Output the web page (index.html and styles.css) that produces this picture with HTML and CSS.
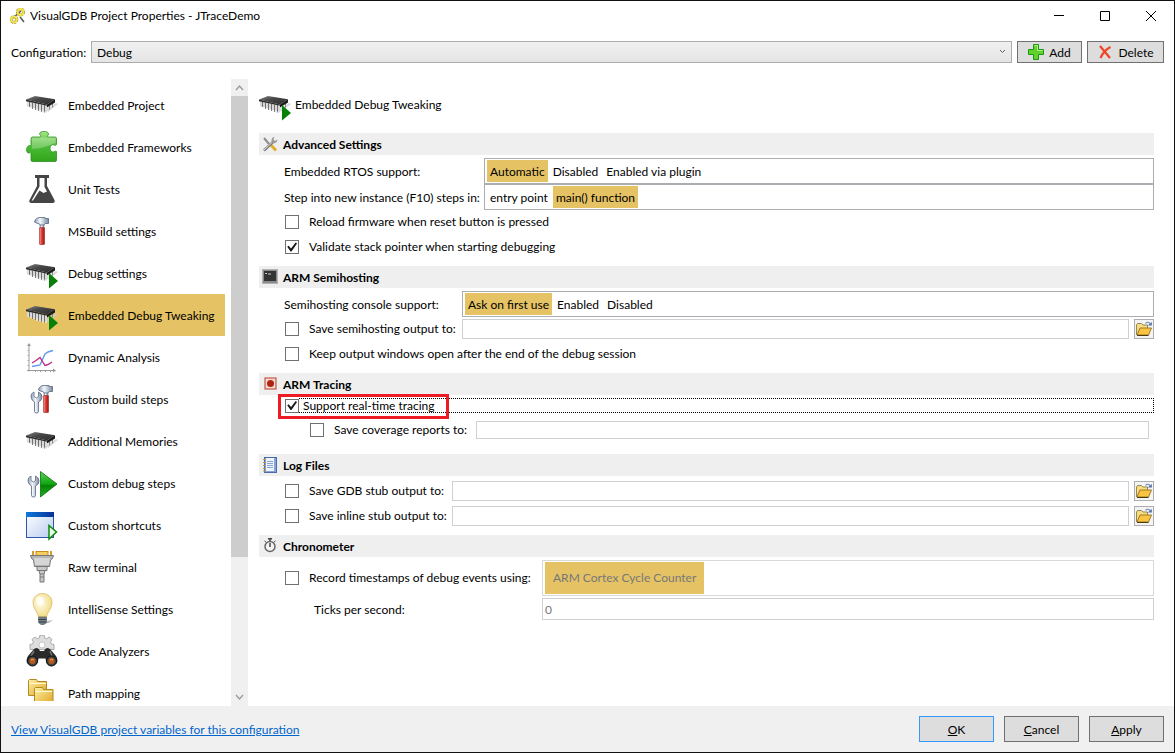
FILE: index.html
```html
<!DOCTYPE html>
<html lang="en">

<head>
    <meta charset="utf-8">
    <title>VisualGDB Project Properties - JTraceDemo</title>
    <link rel="stylesheet" href="styles.css">
</head>

<body>
    <!-- shared icon shapes -->
    <svg class="defs" width="0" height="0" aria-hidden="true">
        <defs>
            <linearGradient id="chipTop" x1="0" y1="0" x2="1" y2="1">
                <stop offset="0" stop-color="#888" />
                <stop offset="0.4" stop-color="#484848" />
                <stop offset="1" stop-color="#2c2c2c" />
            </linearGradient>
            <linearGradient id="green" x1="0" y1="0" x2="0" y2="1">
                <stop offset="0" stop-color="#a5e584" />
                <stop offset="0.5" stop-color="#4cbb35" />
                <stop offset="1" stop-color="#2fa51c" />
            </linearGradient>
            <linearGradient id="play" x1="0" y1="0" x2="0" y2="1">
                <stop offset="0" stop-color="#5bd05b" />
                <stop offset="0.5" stop-color="#0fa30f" />
                <stop offset="0.55" stop-color="#078207" />
                <stop offset="1" stop-color="#1fb51f" />
            </linearGradient>
            <linearGradient id="red" x1="0" y1="0" x2="1" y2="0">
                <stop offset="0" stop-color="#f4a49c" />
                <stop offset="0.45" stop-color="#e03a35" />
                <stop offset="1" stop-color="#9c1513" />
            </linearGradient>
            <linearGradient id="steel" x1="0" y1="0" x2="1" y2="0">
                <stop offset="0" stop-color="#8f9db3" />
                <stop offset="0.4" stop-color="#f4f8fd" />
                <stop offset="1" stop-color="#7a8aa3" />
            </linearGradient>
            <linearGradient id="gold" x1="0" y1="0" x2="1" y2="1">
                <stop offset="0" stop-color="#fdf0a8" />
                <stop offset="1" stop-color="#dfa520" />
            </linearGradient>
            <linearGradient id="pane" x1="0" y1="0" x2="1" y2="1">
                <stop offset="0" stop-color="#fff" />
                <stop offset="1" stop-color="#b9ccf0" />
            </linearGradient>
            <linearGradient id="caption" x1="0" y1="0" x2="1" y2="0">
                <stop offset="0" stop-color="#0a7bdc" />
                <stop offset="1" stop-color="#0a2f96" />
            </linearGradient>
            <radialGradient id="glass" cx="0.4" cy="0.4" r="0.6">
                <stop offset="0" stop-color="#fffdf0" />
                <stop offset="1" stop-color="#f3dc85" />
            </radialGradient>
        </defs>

        <symbol id="chip" viewBox="0 0 32 32">
            <path d="M20 20l10-6 2 1-10 8z" fill="#ccc" opacity="0.7" />
            <path d="M1 12v5l20 6v-6z" fill="#9a9a9a" />
            <path d="M2 12v6M5 13v6M8 13.500v6.500M11 14v8M14 15v7.500M17 15.500v8M20 16v8" stroke="#eee" stroke-width="1.500" />
            <path d="M3.500 13v5M6.500 14v6M9.500 14.500v6.500M12.500 15v7M15.500 15.500v7.500M18.500 16v7.500" stroke="#666" stroke-width="0.800" />
            <path d="M23.500 17v3.500M26.500 15v3.500" stroke="#888" />
            <path d="M0 10.500l9-3.500 20 3.300-8 5.200z" fill="url(#chipTop)" />
            <path d="M0 10.500l21 5v1.200l-21-4.500z" fill="#2a2a2a" />
            <path d="M21 15.500l8-5.200v3.200l-8 5z" fill="#1c1c1c" />
        </symbol>

        <symbol id="chip-run" viewBox="0 0 32 32">
            <use href="#chip" />
            <path d="M23 16l9 8-9 7.500z" fill="#088008" />
        </symbol>

        <symbol id="puzzle" viewBox="0 0 32 32">
            <path d="M5 8q0-2 1.500-2H14c1.500-1 0-2-.5-3C13.500-.5 22.500-.5 22.500 3c0 1.500-2 2-1 3H29q1.500 0 1.500 1.500v6c-1 1.500-2 .5-3 .3-4.500-.8-4.500 7.400-.5 7.200 1.500-.2 2.500-1.500 3.500-.5V29q0 1.500-1.500 1.500H6.500Q5 30.500 5 29v-7c-.5-1-1.500.3-3 0-2.500-1.500-1.500-7.500 1.500-7.500q1.500.5 1.500-1z" fill="url(#green)" stroke="#2f8f22" stroke-width="0.800" />
            <path d="M5.800 8.500q0-1.700 1.500-1.700H29.500v5q-12 6-23.500 6z" fill="#fff" opacity="0.250" />
        </symbol>

        <symbol id="flask" viewBox="0 0 32 32">
            <path d="M9 2h14v3h-2v8l7.500 14q1 3-2 3h-21q-3 0-2-3L11 13V5H9z" fill="#454545" />
            <path d="M13.500 5h5v9l2.500 4.500-3.500 1.500-4-2.500-6.500 10H5.700l7.800-14z" fill="#fff" />
        </symbol>

        <symbol id="hammer" viewBox="0 0 32 32">
            <path d="M14 9h4v5h-4z" fill="url(#steel)" stroke="#68788f" stroke-width="0.600" />
            <path d="M8.500 7q1-4.500 5.500-4.500h5V3.500h3.500v5H19l-1 1.500h-4q-.5-2-2.500-1.500z" fill="url(#steel)" stroke="#56667e" stroke-width="0.800" />
            <rect x="13.500" y="12.500" width="5" height="17" rx="0.600" fill="url(#red)" stroke="#932420" stroke-width="0.600" />
        </symbol>

        <symbol id="wrench" viewBox="0 0 32 32">
            <path d="M8 9q-3.500 1.500-3 5t3.500 5v9.500q0 1.500 2 1.500t2-1.500V19q3.500-1.500 3.500-5t-3.500-5v4.500l-2 1.500-2.500-1.500z" fill="url(#steel)" stroke="#66758b" stroke-width="0.900" />
        </symbol>

        <symbol id="steps" viewBox="0 0 32 32">
            <use href="#hammer" x="4" />
            <use href="#wrench" />
        </symbol>

        <symbol id="debug-steps" viewBox="0 0 32 32">
            <use href="#wrench" x="-3" />
            <path d="M14.500 4.500L31 17 14.500 30z" fill="url(#play)" stroke="#087008" stroke-width="0.800" />
        </symbol>

        <symbol id="chart" viewBox="0 0 32 32">
            <path d="M3 3v27.500M1 29.500h27M1.500 9.500h1M1.500 14.500h1M1.500 19.500h1M1.500 24.500h1M9.500 29v2M14.500 29v2M19.500 29v2M24.500 29v2" stroke="#9a9a9a" fill="none" />
            <path d="M1 5l2-3 2 3zM27 27.500l3 2-3 2z" fill="#9a9a9a" />
            <path d="M6 25.500l8-1.500 5-11 3-2 5-1.500" stroke="#5b9bf0" stroke-width="1.400" fill="none" />
            <path d="M6 22l4-2.500 4-3 5 8 3-1 4-2.500" stroke="#c02c86" stroke-width="1.400" fill="none" />
        </symbol>

        <symbol id="shortcut" viewBox="0 0 32 32">
            <rect x="0.500" y="3.500" width="27" height="25" fill="url(#pane)" stroke="#2f56a8" />
            <rect x="0" y="3" width="28" height="5" fill="url(#caption)" />
            <path d="M23 16.500l7.500 6.500-7.500 7z" fill="#e8fbe8" stroke="#0b8a0b" stroke-width="1.500" />
        </symbol>

        <symbol id="plug" viewBox="0 0 32 32">
            <rect x="10" y="0.500" width="12" height="4" fill="#f5cf5a" stroke="#c58c1e" />
            <path d="M7 0v5M25 0v5" stroke="#d89b26" stroke-width="2" />
            <path d="M4.500 4.500h23l-1 3-2 1.500-1 6.500h-15l-1-6.500-2-1.500z" fill="#b5b5b5" stroke="#767676" />
            <path d="M8 7h16l-1 7H9z" fill="#d6d6d6" />
            <path d="M11 15.500h10v4h-2l-1 4v7.500h-4v-7.500l-1-4h-2z" fill="#c8c8c8" stroke="#777" />
            <path d="M13 19.500h6M14 23h4M14 26h4" stroke="#777" />
        </symbol>

        <symbol id="bulb" viewBox="0 0 32 32">
            <path d="M19 28l8-1-4 3-6 1z" fill="#aaa" opacity="0.700" />
            <path d="M12.500 24c0-4-5.500-8-5.500-14.500 0-12 19-12 19 0C26 16 20.500 20 20.500 24z" fill="url(#glass)" stroke="#d9bd64" stroke-width="0.800" />
            <path d="M12.500 24h8v5.500l-2.500 2h-3l-2.500-2z" fill="#77838c" stroke="#4c555c" stroke-width="0.600" />
            <path d="M12.500 26.500h8M13 29h7" stroke="#333b42" />
            <ellipse cx="14" cy="8" rx="4" ry="4.500" fill="#fff" opacity="0.700" />
        </symbol>

        <symbol id="binoculars" viewBox="0 0 32 32">
            <path d="M14 0h4l.7 3 2 .8L23 2l3 2.500-1.500 2.500 1 2 2.500.5v5h-24v-5l2.500-.5 1-2L6 4.500 9 2l2.300 1.800 2-.8z" fill="#dedede" stroke="#9a9a9a" stroke-width="0.800" />
            <circle cx="16" cy="10" r="3" fill="#fff" stroke="#aaa" stroke-width="0.600" />
            <path d="M8 14q4-3 6 2h4q2-5 6-2l6 7q3 5 0 8-3 3-7 1.500-3-1.500-3.500-7h-7q-.5 5.500-3.500 7-4 1.500-7-1.500-3-3 0-8z" fill="#2a2a2a" />
            <path d="M8 16l-3 5M24 16l2 5" stroke="#777" stroke-width="1.500" />
            <circle cx="6.500" cy="26" r="5" fill="#444" stroke="#111" />
            <circle cx="25.500" cy="26" r="5" fill="#444" stroke="#111" />
            <circle cx="6.500" cy="26" r="3" fill="#b5591c" />
            <circle cx="25.500" cy="26" r="3" fill="#b5591c" />
            <path d="M5 25q1.500-1.500 3 0M24 25q1.500-1.500 3 0" stroke="#ffac58" fill="none" />
        </symbol>

        <symbol id="folders" viewBox="0 0 32 32">
            <path d="M2.500 18.500v-15l1-1h7l1 2h9v14z" fill="url(#gold)" stroke="#b38a22" />
            <path d="M3 6.500h17" stroke="#fff8cf" />
            <path d="M8.500 27.500v-16l1-1h7l1 2h9.500v15z" fill="url(#gold)" stroke="#b38a22" />
            <path d="M9 14.500h17" stroke="#fff8cf" />
        </symbol>

        <symbol id="open" viewBox="0 0 16 16">
            <path d="M.5 14V4l1-1.500h4L7 4h4.500v3" fill="#f9dd7c" stroke="#94865a" />
            <path d="M1 14l3-7h11.500l-3 7z" fill="#fbc440" stroke="#9a7a2c" />
            <path d="M1 14.500h11.500" stroke="#4b3a10" />
            <path d="M9.500 2.500q2-2.500 4.500 0" stroke="#6d88bb" fill="none" stroke-width="1.200" />
            <path d="M15.800 1v3.500h-4z" fill="#4d6ea8" />
        </symbol>
    </svg>

    <div class="window">
        <header class="titlebar">
            <svg class="icon16" viewBox="0 0 16 16">
                <path d="M10 9l4 5M3 10l8-7" stroke="#555" stroke-width="1.500" />
                <circle cx="10.500" cy="4" r="3" fill="none" stroke="#a39116" stroke-width="3" stroke-dasharray="2 0.500" />
                <circle cx="10.500" cy="4" r="3" fill="none" stroke="#f3e552" stroke-width="1.800" />
                <circle cx="4" cy="11.500" r="2.800" fill="none" stroke="#a39116" stroke-width="3" stroke-dasharray="2 0.500" />
                <circle cx="4" cy="11.500" r="2.800" fill="none" stroke="#f3e552" stroke-width="1.800" />
            </svg>
            <h1>VisualGDB Project Properties - JTraceDemo</h1>
            <button class="caption-button" aria-label="Minimize"><svg width="10" height="10" viewBox="0 0 10 10"><path d="M0 4.500h10" stroke="#000" /></svg></button>
            <button class="caption-button" aria-label="Maximize"><svg width="10" height="10" viewBox="0 0 10 10"><path d="M.5.5h9v9h-9z" fill="none" stroke="#000" /></svg></button>
            <button class="caption-button" aria-label="Close"><svg width="10" height="10" viewBox="0 0 10 10"><path d="M0 0l10 10M10 0L0 10" stroke="#000" /></svg></button>
        </header>

        <div class="config">
            <label for="configuration">Configuration:</label>
            <div class="combo">
                <select id="configuration">
                    <option>Debug</option>
                </select>
                <svg class="combo-arrow" width="7" height="5" viewBox="0 0 7 5"><path d="M1 1l2.500 2.500L6 1" fill="none" stroke="#606060" /></svg>
            </div>
            <button class="button add">
                <svg class="icon16" viewBox="0 0 16 16"><path d="M5.500.5h5v5h5v5h-5v5h-5v-5h-5v-5h5z" fill="#5fd32c" stroke="#1d9612" /><path d="M6.500 1.500h3v5h5" fill="none" stroke="#b5f08a" /></svg>
                <span>Add</span>
            </button>
            <button class="button delete">
                <svg class="icon16" viewBox="0 0 16 16"><path d="M3 2l10 12M13.500 3Q7 6 3.500 14" fill="none" stroke="#f04423" stroke-width="2.200" /></svg>
                <span>Delete</span>
            </button>
        </div>

        <div class="body">
            <nav class="sidebar">
                <ul class="pages">
                    <li><a href="#"><svg><use href="#chip" /></svg><span>Embedded Project</span></a></li>
                    <li><a href="#"><svg><use href="#puzzle" /></svg><span>Embedded Frameworks</span></a></li>
                    <li><a href="#"><svg><use href="#flask" /></svg><span>Unit Tests</span></a></li>
                    <li><a href="#"><svg><use href="#hammer" /></svg><span>MSBuild settings</span></a></li>
                    <li><a href="#"><svg><use href="#chip-run" /></svg><span>Debug settings</span></a></li>
                    <li><a href="#" class="selected"><svg><use href="#chip-run" /></svg><span>Embedded Debug Tweaking</span></a></li>
                    <li><a href="#"><svg><use href="#chart" /></svg><span>Dynamic Analysis</span></a></li>
                    <li><a href="#"><svg><use href="#steps" /></svg><span>Custom build steps</span></a></li>
                    <li><a href="#"><svg><use href="#chip" /></svg><span>Additional Memories</span></a></li>
                    <li><a href="#"><svg><use href="#debug-steps" /></svg><span>Custom debug steps</span></a></li>
                    <li><a href="#"><svg><use href="#shortcut" /></svg><span>Custom shortcuts</span></a></li>
                    <li><a href="#"><svg><use href="#plug" /></svg><span>Raw terminal</span></a></li>
                    <li><a href="#"><svg><use href="#bulb" /></svg><span>IntelliSense Settings</span></a></li>
                    <li><a href="#"><svg><use href="#binoculars" /></svg><span>Code Analyzers</span></a></li>
                    <li><a href="#"><svg><use href="#folders" /></svg><span>Path mapping</span></a></li>
                </ul>
                <div class="scrollbar">
                    <svg viewBox="0 0 17 17"><path d="M5 11l3.500-4 3.500 4" fill="none" stroke="#999" stroke-width="1.300" /></svg>
                    <div class="track"><div class="thumb"></div></div>
                    <svg viewBox="0 0 17 17"><path d="M5 6l3.500 4L12 6" fill="none" stroke="#999" stroke-width="1.300" /></svg>
                </div>
            </nav>

            <main>
                <div class="page-title">
                    <svg><use href="#chip-run" /></svg>
                    <span>Embedded Debug Tweaking</span>
                </div>

                <section class="advanced">
                    <h2>
                        <svg class="icon16" viewBox="0 0 16 16"><path d="M2 2l5 6" stroke="#8c8c8c" stroke-width="2" /><path d="M8 8l6 6.500" stroke="#e0b02c" stroke-width="3" /><path d="M2 14.500L11 6" stroke="#7c7c7c" stroke-width="2.500" /><path d="M2 14L11 5.500" stroke="#d9d9d9" /><path d="M12.500.8q-3 .7-3 4t3.500 2.200q2.500-.8 2.500-3.500L13 5l-1.500-1.500z" fill="#9a9a9a" /></svg>
                        <span>Advanced Settings</span>
                    </h2>
                    <div class="rows">
                        <div class="row choice">
                            <span class="caption">Embedded RTOS support:</span>
                            <div class="options">
                                <label><input type="radio" name="rtos" checked>Automatic</label>
                                <label><input type="radio" name="rtos">Disabled</label>
                                <label><input type="radio" name="rtos">Enabled via plugin</label>
                            </div>
                        </div>
                        <div class="row choice">
                            <span class="caption">Step into new instance (F10) steps in:</span>
                            <div class="options">
                                <label><input type="radio" name="step">entry point</label>
                                <label><input type="radio" name="step" checked>main() function</label>
                            </div>
                        </div>
                        <div class="row">
                            <label class="check"><input type="checkbox">Reload firmware when reset button is pressed</label>
                        </div>
                        <div class="row">
                            <label class="check"><input type="checkbox" checked>Validate stack pointer when starting debugging</label>
                        </div>
                    </div>
                </section>

                <section class="semihosting">
                    <h2>
                        <svg class="icon16" viewBox="0 0 16 16"><rect x="0.500" y="0.500" width="15" height="14" fill="#8b8b8b" stroke="#b4b4b4" /><rect x="2" y="2" width="12" height="10" fill="#333" /><path d="M3 4.500h2M6 5h3" stroke="#ccc" /></svg>
                        <span>ARM Semihosting</span>
                    </h2>
                    <div class="rows">
                        <div class="row choice">
                            <span class="caption">Semihosting console support:</span>
                            <div class="options">
                                <label><input type="radio" name="console" checked>Ask on first use</label>
                                <label><input type="radio" name="console">Enabled</label>
                                <label><input type="radio" name="console">Disabled</label>
                            </div>
                        </div>
                        <div class="row">
                            <label class="check caption"><input type="checkbox">Save semihosting output to:</label>
                            <input type="text" class="path" aria-label="Semihosting output file">
                            <button class="browse" aria-label="Browse"><svg class="icon16"><use href="#open" /></svg></button>
                        </div>
                        <div class="row">
                            <label class="check"><input type="checkbox">Keep output windows open after the end of the debug session</label>
                        </div>
                    </div>
                </section>

                <section class="tracing">
                    <h2>
                        <svg class="icon16" viewBox="0 0 16 16"><rect x="3" y="2" width="11" height="11" fill="#f6d9d2" stroke="#c05a48" stroke-width="1.200" /><circle cx="8.500" cy="7.500" r="3.500" fill="#ae2410" /></svg>
                        <span>ARM Tracing</span>
                    </h2>
                    <div class="rows">
                        <div class="row realtime">
                            <label class="check"><input type="checkbox" checked><span>Support real-time tracing</span></label>
                        </div>
                        <div class="row coverage">
                            <label class="check caption"><input type="checkbox">Save coverage reports to:</label>
                            <input type="text" class="path" aria-label="Coverage report file">
                        </div>
                    </div>
                </section>

                <section class="logs">
                    <h2>
                        <svg class="icon16" viewBox="0 0 16 16"><rect x="2.500" y="0.500" width="12" height="15" fill="#86a5d8" stroke="#4a6aa8" /><rect x="4" y="1" width="8" height="13" fill="#eef4ff" /><path d="M5 4.500h6M5 6.500h6M5 8.500h6M5 10.500h6" stroke="#8aa5d2" /><path d="M1 2.500h3M1 5.500h3M1 8.500h3M1 11.500h3M1 14h3" stroke="#b59b4a" /></svg>
                        <span>Log Files</span>
                    </h2>
                    <div class="rows">
                        <div class="row">
                            <label class="check caption"><input type="checkbox">Save GDB stub output to:</label>
                            <input type="text" class="path" aria-label="GDB stub output file">
                            <button class="browse" aria-label="Browse"><svg class="icon16"><use href="#open" /></svg></button>
                        </div>
                        <div class="row">
                            <label class="check caption"><input type="checkbox">Save inline stub output to:</label>
                            <input type="text" class="path" aria-label="Inline stub output file">
                            <button class="browse" aria-label="Browse"><svg class="icon16"><use href="#open" /></svg></button>
                        </div>
                    </div>
                </section>

                <section class="chronometer">
                    <h2>
                        <svg class="icon16" viewBox="0 0 16 16"><circle cx="8" cy="8.500" r="5" fill="#f4f4f4" stroke="#666" stroke-width="1.500" /><path d="M6 .8h4M8 1v2M8 5v4" stroke="#444" stroke-width="1.500" /><path d="M2.500 3l1.500 1M13.500 3L12 4" stroke="#555" /></svg>
                        <span>Chronometer</span>
                    </h2>
                    <div class="rows">
                        <div class="row choice tall">
                            <label class="check caption"><input type="checkbox">Record timestamps of debug events using:</label>
                            <div class="options disabled">
                                <label><input type="radio" name="counter" checked disabled>ARM Cortex Cycle Counter</label>
                            </div>
                        </div>
                        <div class="row ticks">
                            <label class="caption" for="ticks">Ticks per second:</label>
                            <input type="text" id="ticks" value="0" disabled>
                        </div>
                    </div>
                </section>
            </main>
        </div>

        <footer>
            <a href="#">View VisualGDB project variables for this configuration</a>
            <button class="button default"><span><u>O</u>K</span></button>
            <button class="button"><span><u>C</u>ancel</span></button>
            <button class="button"><span><u>A</u>pply</span></button>
        </footer>
    </div>
</body>

</html>
```
FILE: styles.css
```css
* {
    box-sizing: border-box;
}

body {
    margin: 0;
}

body,
button,
input,
select {
    font-family: Lato, "Noto Sans", sans-serif;
    font-size: 12px;
    line-height: 16px;
    color: #000;
}

.defs {
    position: absolute;
}

.window {
    display: flex;
    flex-direction: column;
    height: 100vh;
    border: 1px solid #111;
    background-color: #fff;
}

.icon16 {
    width: 16px;
    height: 16px;
    flex: none;
}

/* title bar */
.titlebar {
    display: flex;
    align-items: center;
    height: 30px;
    padding-left: 9px;
}

.titlebar h1 {
    flex: 1;
    margin: 0 0 0 4px;
    font-size: 12px;
    font-weight: normal;
}

.caption-button {
    display: flex;
    align-items: center;
    justify-content: center;
    width: 46px;
    height: 28px;
    padding: 0;
    border: none;
    background: none;
}

/* configuration row */
.config {
    display: flex;
    align-items: center;
    gap: 5px;
    margin: 10px 10px 0;
}

.config label {
    width: 75px;
    padding-top: 2px;
    white-space: nowrap;
}

.combo {
    position: relative;
    flex: 1;
}

.combo select {
    display: block;
    width: 100%;
    height: 22px;
    padding: 2px 5px 0;
    border: 1px solid #acacac;
    border-radius: 0;
    background: linear-gradient(#f0f0f0, #e5e5e5);
    appearance: none;
}

.combo-arrow {
    position: absolute;
    top: 8px;
    right: 6px;
}

.button {
    display: flex;
    align-items: center;
    justify-content: center;
    gap: 5px;
    width: 75px;
    height: 26px;
    padding: 0;
    border: 1px solid #707070;
    background-color: #ddd;
}

.button span {
    padding-top: 2px;
}

.config .button {
    height: 22px;
}

.config .add {
    width: 65px;
}

.config .delete {
    width: 77px;
}

/* body */
.body {
    display: flex;
    flex: 1;
    min-height: 0;
    padding-top: 16px;
}

.sidebar {
    display: flex;
    width: 247px;
    padding-left: 17px;
}

.pages {
    flex: 1;
    margin: 5px 6px 5px 0;
    padding: 0;
    overflow: hidden;
    list-style: none;
}

.pages a {
    display: flex;
    align-items: center;
    gap: 10px;
    height: 42px;
    padding-left: 8px;
    color: #000;
    text-decoration: none;
    white-space: nowrap;
}

.pages span,
h2 span {
    padding-top: 2px;
}

.pages a.selected {
    background-color: #e5c365;
}

.pages svg,
.page-title svg {
    width: 32px;
    height: 32px;
    flex: none;
}

.scrollbar {
    display: flex;
    flex-direction: column;
    width: 17px;
    background-color: #f0f0f0;
}

.scrollbar svg {
    width: 17px;
    height: 17px;
}

.track {
    flex: 1;
}

.thumb {
    height: calc(100% * 7 / 9);
    background-color: #cdcdcd;
}

/* settings page */
main {
    flex: 1;
    padding: 8px 20px 0 11px;
}

.page-title {
    display: flex;
    align-items: center;
    gap: 4px;
    height: 36px;
    margin-bottom: 10px;
}

h2 {
    display: flex;
    align-items: center;
    gap: 5px;
    height: 22px;
    margin: 0;
    padding-left: 3px;
    background-color: #efefef;
    font-size: 12px;
    font-weight: bold;
}

.rows {
    padding: 3px 0 6px 25px;
}

.row {
    display: flex;
    align-items: center;
    height: 25px;
    padding-bottom: 1px;
    white-space: nowrap;
}

.row.choice,
.row.ticks,
.row.realtime {
    padding-bottom: 0;
}

.choice {
    height: 26px;
}

.caption {
    flex: none;
}

.choice > span.caption {
    padding-top: 2px;
}

.advanced .caption {
    width: 200px;
}

.semihosting .caption {
    width: 178px;
}

.tracing .caption {
    width: 167px;
}

.logs .caption {
    width: 168px;
}

.chronometer .caption {
    width: 258px;
}

.check {
    display: flex;
    align-items: center;
    gap: 10px;
}

.check input {
    width: 14px;
    height: 14px;
    margin: 0 0 0 1px;
    flex: none;
    border: 1px solid #707070;
    background-color: #fff;
    appearance: none;
}

.check input:checked::after {
    content: "";
    display: block;
    width: 12px;
    height: 12px;
    background-color: #1a1a1a;
    clip-path: polygon(10% 48%, 22% 40%, 42% 62%, 80% 12%, 92% 20%, 46% 88%, 38% 88%);
}

.options {
    display: flex;
    align-items: center;
    gap: 2px;
    flex: 1;
    height: 26px;
    padding: 0 2px;
    border: 1px solid #abadb3;
}

.options label {
    padding: 4px 3px 2px;
}

.options label:has(:checked) {
    background-color: #e5c365;
}

.options input {
    position: absolute;
    opacity: 0;
    margin: 0;
}

.path,
#ticks {
    flex: 1;
    height: 20px;
    padding: 0 2px;
    border: 1px solid #cfd0d3;
    background-color: #fff;
}

.browse {
    display: flex;
    align-items: center;
    justify-content: center;
    width: 20px;
    height: 20px;
    margin-left: 5px;
    padding: 0;
    border: 1px solid #abadb3;
    background-color: #f4f4f4;
}

/* real-time tracing, with focus and red outline around it */
.tracing .rows {
    padding-bottom: 11px;
}

.realtime {
    position: relative;
    height: 15px;
    margin-bottom: 5px;
}

.realtime .check {
    flex: 1;
    gap: 0;
}

.realtime .check span {
    flex: 1;
    padding-left: 4px;
    height: 15px;
    line-height: 14px;
    border: 1px dotted #000;
    border-left: none;
}

.realtime::after {
    content: "";
    position: absolute;
    top: -4px;
    left: -6px;
    box-sizing: border-box;
    width: 171px;
    height: 25px;
    border: 3px solid #ed1c24;
}

.coverage {
    padding-right: 5px;
    padding-left: 25px;
}

.coverage .path {
    height: 18px;
}

.choice.tall {
    height: 36px;
    margin-bottom: 2px;
}

.tall .options {
    height: 36px;
    border-color: #d9d9d9;
}

.tall .options label {
    padding: 8px;
}

.disabled,
#ticks {
    color: #777;
}

.row.ticks {
    height: 22px;
}

.ticks .caption {
    padding: 2px 0 0 30px;
}

#ticks {
    height: 22px;
}

/* footer */
footer {
    display: flex;
    align-items: center;
    gap: 10px;
    height: 46px;
    padding: 0 10px;
    background-color: #f0f0f0;
}

footer a {
    margin-right: auto;
    padding-top: 2px;
    color: #0066cc;
}

.button.default {
    border-color: #3399ff;
}
```
